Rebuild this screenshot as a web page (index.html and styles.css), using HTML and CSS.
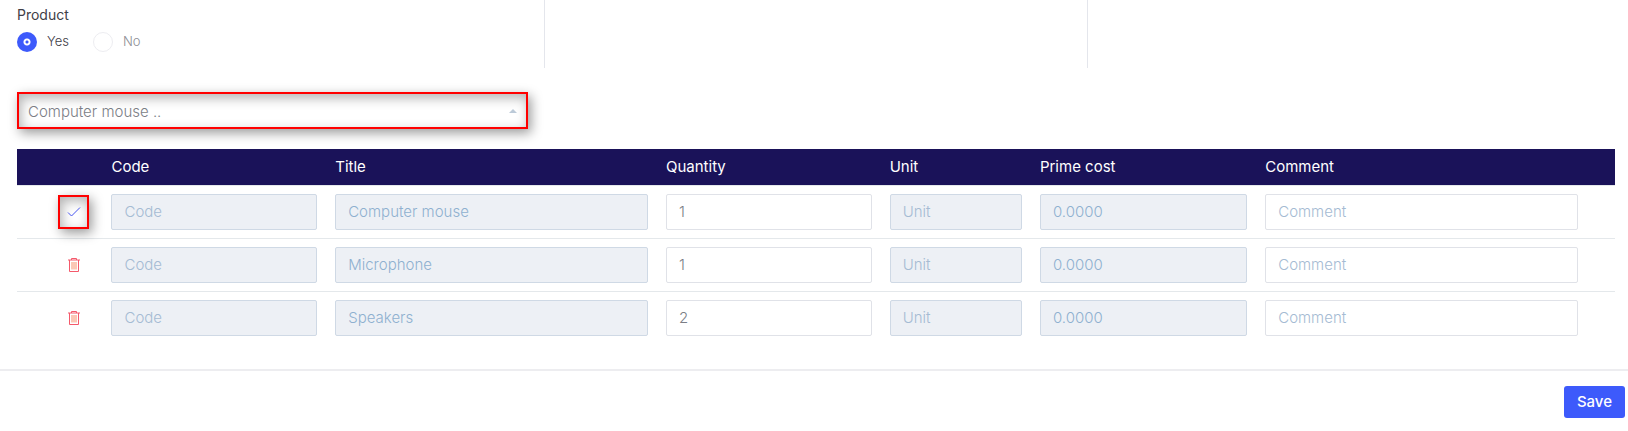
FILE: index.html
```html
<!DOCTYPE html>
<html lang="en">
<head>
<meta charset="utf-8">
<title>Product</title>
<link rel="stylesheet" href="styles.css">
</head>
<body>
<form class="page">
  <div class="top">
    <fieldset class="top-cell">
      <legend class="legend">Product</legend>
      <div class="radios">
        <label class="radio"><input type="radio" name="product" checked><span class="radio-text">Yes</span></label>
        <label class="radio"><input type="radio" name="product"><span class="radio-text radio-muted">No</span></label>
      </div>
    </fieldset>
    <div class="top-cell"></div>
    <div class="top-cell"></div>
  </div>

  <div class="picker">
    <select class="select highlight" aria-label="Product item"><option>Computer mouse ..</option></select>
    <svg class="caret" viewBox="0 0 8 4" aria-hidden="true"><path d="M0 4L4 0L8 4Z"/></svg>
  </div>

  <table class="items">
    <colgroup>
      <col><col class="c-code"><col class="c-title"><col class="c-code"><col class="c-unit"><col class="c-cost"><col class="c-title"><col class="c-end">
    </colgroup>
    <thead>
      <tr><th></th><th>Code</th><th>Title</th><th>Quantity</th><th>Unit</th><th>Prime cost</th><th>Comment</th><th></th></tr>
    </thead>
    <tbody>
      <tr>
        <td><button type="button" class="icon-btn highlight" aria-label="Confirm"><svg class="icon check" viewBox="0 0 14 14"><path d="M1 7.5L4.5 11L13 2.5"/></svg></button></td>
        <td><input class="field" placeholder="Code" aria-label="Code" disabled></td>
        <td><input class="field" value="Computer mouse" aria-label="Title" disabled></td>
        <td><input class="field" value="1" aria-label="Quantity"></td>
        <td><input class="field" placeholder="Unit" aria-label="Unit" disabled></td>
        <td><input class="field" value="0.0000" aria-label="Prime cost" disabled></td>
        <td><input class="field" placeholder="Comment" aria-label="Comment"></td>
        <td></td>
      </tr>
      <tr>
        <td><button type="button" class="icon-btn" aria-label="Delete"><svg class="icon trash" viewBox="0 0 14 14"><path d="M1 2H13M4.5 2V.5H9.5V2M2.5 2V13.5H11.5V2"/><path class="slats" d="M5 4V11.500M7 4V11.500M9 4V11.500"/></svg></button></td>
        <td><input class="field" placeholder="Code" aria-label="Code" disabled></td>
        <td><input class="field" value="Microphone" aria-label="Title" disabled></td>
        <td><input class="field" value="1" aria-label="Quantity"></td>
        <td><input class="field" placeholder="Unit" aria-label="Unit" disabled></td>
        <td><input class="field" value="0.0000" aria-label="Prime cost" disabled></td>
        <td><input class="field" placeholder="Comment" aria-label="Comment"></td>
        <td></td>
      </tr>
      <tr>
        <td><button type="button" class="icon-btn" aria-label="Delete"><svg class="icon trash" viewBox="0 0 14 14"><path d="M1 2H13M4.5 2V.5H9.5V2M2.5 2V13.5H11.5V2"/><path class="slats" d="M5 4V11.500M7 4V11.500M9 4V11.500"/></svg></button></td>
        <td><input class="field" placeholder="Code" aria-label="Code" disabled></td>
        <td><input class="field" value="Speakers" aria-label="Title" disabled></td>
        <td><input class="field" value="2" aria-label="Quantity"></td>
        <td><input class="field" placeholder="Unit" aria-label="Unit" disabled></td>
        <td><input class="field" value="0.0000" aria-label="Prime cost" disabled></td>
        <td><input class="field" placeholder="Comment" aria-label="Comment"></td>
        <td></td>
      </tr>
    </tbody>
  </table>

  <div class="footer"><button type="submit" class="save">Save</button></div>
</form>
</body>
</html>
```
FILE: styles.css
```css
* { box-sizing: border-box; }
body {
  margin: 0;
  background: #fff;
  color: #3f4047;
  font: 300 15px/20px Inter, "Open Sans", sans-serif;
}
input, select, button { font: inherit; }

.top { display: grid; grid-template-columns: 545px 543px 1fr; }
.top-cell {
  height: 68px;
  margin: 0;
  border: 0;
  border-right: 1px solid #e4e6ec;
  padding: 5px 17px 0;
}
.top-cell:last-child { border-right: 0; }
.legend { float: left; width: 100%; padding: 0; font-size: 14px; font-weight: 400; }
.radios { display: flex; gap: 24px; padding-top: 6px; clear: both; }
.radio { display: flex; align-items: center; gap: 10px; font-size: 13px; }
.radio-text { padding-bottom: 2px; }
.radio input {
  appearance: none;
  width: 20px;
  height: 20px;
  margin: 0;
  border: 1px solid #ededf1;
  border-radius: 50%;
}
.radio input:checked {
  border: 0;
  background: radial-gradient(circle, #3d5afb 1px, #fff 2px, #fff 3px, #3d5afb 4px);
}
.radio-muted { color: #8d8e94; }

.picker { display: grid; width: 511px; margin: 24px 17px 20px; align-items: center; }
.picker > * { grid-area: 1 / 1; }
.select {
  appearance: none;
  width: 100%;
  height: 37px;
  padding: 2px 9px 0;
  background: #fff;
  color: #7b7e86;
}
.highlight {
  border: 2px solid #f00;
  border-radius: 0;
  box-shadow: 3px 4px 12px rgba(0, 0, 0, .4), inset 2px 4px 12px rgba(0, 0, 0, .3);
}
.caret { width: 8px; height: 4px; margin-right: 11px; justify-self: end; fill: #bccad8; pointer-events: none; }

.items { width: calc(100% - 30px); margin: 0 13px 0 17px; border-collapse: separate; border-spacing: 0; table-layout: fixed; }
.c-code { width: 14%; }
.c-title { width: 20.7%; }
.c-unit { width: 9.4%; }
.c-cost { width: 14.1%; }
.c-end { width: 28px; }
.items th {
  height: 36px;
  padding: 0 9px;
  background: #1a1259;
  color: #fff;
  font-weight: 400;
  font-size: 15px;
  text-align: left;
}
.items td { border-top: 1px solid #e4e8eb; padding: 8px 9px; }
.items td:first-child { padding: 0 13px 0 0; text-align: right; vertical-align: middle; }
.field {
  display: block;
  width: 100%;
  height: 36px;
  border: 1px solid #e0e2e8;
  border-radius: 2px;
  padding: 0 12px 2px;
  background: #fff;
  color: #7b7e86;
}
.field:disabled { border-color: #cfd9e5; background: #edf0f5; color: #8fb0d0; }
.field::placeholder { color: #a5bbd3; opacity: 1; }
.icon-btn {
  display: inline-grid;
  place-items: center;
  width: 31px;
  height: 34px;
  padding: 0;
  background: #fff;
  vertical-align: middle;
}
.icon-btn:not(.highlight) { border: 0; }
.icon { width: 14px; height: 14px; fill: none; }
.check { stroke: #4654f0; }
.trash { stroke: #f4596b; }
.slats { stroke: #f7906c; }

.footer { display: flex; justify-content: flex-end; margin-top: 25px; border-top: 2px solid #ededf0; padding: 15px 3px 12px; }
.save {
  height: 32px;
  border: 0;
  border-radius: 3px;
  padding: 0 13px;
  background: #3d5afb;
  color: #fff;
  font-size: 15px;
  font-weight: 500;
}
```
